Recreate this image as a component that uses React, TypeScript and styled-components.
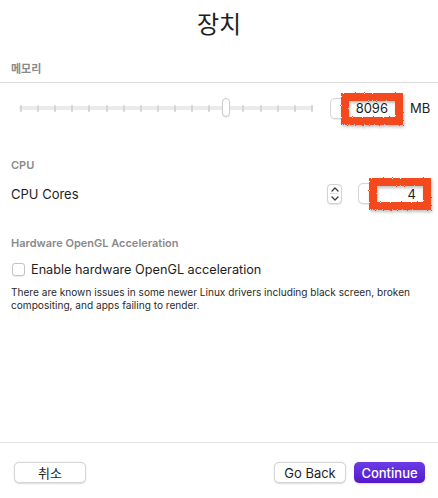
import React from "react";
import styled, { createGlobalStyle } from "styled-components";

const Global = createGlobalStyle`
  html, body { margin: 0; padding: 0; background: #ffffff; }
  body {
    font-family: Inter, "Noto Sans", "Noto Sans CJK KR", sans-serif;
    color: #222;
    -webkit-font-smoothing: antialiased;
  }
`;

const Page = styled.div`
  width: 438px;
  height: 498px;
  display: flex;
  flex-direction: column;
  background: #fff;
  overflow: hidden;
`;

const Title = styled.h1`
  margin: 0;
  height: 46px;
  line-height: 46px;
  text-align: center;
  font-family: "Noto Sans CJK KR", sans-serif;
  font-weight: 400;
  font-size: 24px;
  color: #1e1e1e;
`;

const SectionLabel = styled.div<{ $top: number; $divider?: boolean }>`
  margin: ${(p) => p.$top}px 0 0;
  padding: 0 11px ${(p) => (p.$divider ? 6 : 0)}px;
  font-family: Inter, "Noto Sans CJK KR", sans-serif;
  font-size: 11px;
  line-height: 14px;
  font-weight: 600;
  color: #8a8a8a;
  border-bottom: ${(p) => (p.$divider ? "1px solid #dcdcdc" : "none")};
`;

const SliderRow = styled.div`
  margin-top: 14px;
  height: 22px;
  display: flex;
  align-items: center;
  padding-left: 19px;
`;

const Slider = styled.div`
  position: relative;
  width: 294px;
  height: 22px;
  display: flex;
  align-items: center;
`;

const Track = styled.div`
  width: 100%;
  height: 4px;
  border-radius: 2px;
  background: #ebebeb;
  display: flex;
  align-items: center;
  justify-content: space-between;
  padding: 0 0 0 1px;
  box-sizing: border-box;
`;

const Tick = styled.div`
  width: 2px;
  height: 7px;
  background: #d6d6d6;
  border-radius: 1px;
`;

const Thumb = styled.div`
  position: absolute;
  top: 1px;
  width: 8px;
  height: 19px;
  border-radius: 4px;
  background: #fff;
  border: 1px solid #cdcdcd;
  box-sizing: border-box;
  box-shadow: 0 0.5px 1px rgba(0, 0, 0, 0.12);
`;

const InputWrap = styled.div<{ $ml: number }>`
  position: relative;
  margin-left: ${(p) => p.$ml}px;
  width: 70px;
  height: 21px;
`;

const NumberBox = styled.div`
  width: 100%;
  height: 100%;
  box-sizing: border-box;
  border: 1px solid #d6d6d6;
  border-radius: 5px;
  background: #fff;
  box-shadow: 0 0.5px 1px rgba(0, 0, 0, 0.08);
  display: flex;
  align-items: center;
  justify-content: flex-end;
  padding-right: 11px;
  font-size: 13px;
  color: #1e1e1e;
`;

const ScribbleSvg = styled.svg`
  position: absolute;
  left: 11px;
  top: -5px;
  width: 62px;
  height: 32px;
  overflow: visible;
  pointer-events: none;
  filter: drop-shadow(1px 2px 1.5px rgba(0, 0, 0, 0.25));
`;

const Unit = styled.span`
  margin-left: 10px;
  font-size: 13px;
  color: #1e1e1e;
`;

const CpuRow = styled.div`
  margin-top: 11px;
  height: 21px;
  display: flex;
  align-items: center;
  padding: 0 10px 0 11px;
`;

const RowLabel = styled.span`
  flex: 1;
  font-size: 13px;
  color: #1e1e1e;
`;

const Stepper = styled.div`
  width: 15px;
  height: 20px;
  box-sizing: border-box;
  border: 1px solid #d3d3d3;
  border-radius: 4px;
  background: #fff;
  box-shadow: 0 0.5px 1px rgba(0, 0, 0, 0.1);
  display: flex;
  flex-direction: column;
  align-items: center;
  justify-content: space-between;
  padding: 2px 0;
`;

const StepDivider = styled.div`
  width: 9px;
  height: 1px;
  background: #e2e2e2;
`;

const CheckRow = styled.label`
  margin-top: 11px;
  height: 16px;
  display: flex;
  align-items: center;
  padding-left: 12px;
  gap: 6px;
  font-size: 12.7px;
  color: #1e1e1e;
`;

const CheckBox = styled.span`
  width: 13px;
  height: 13px;
  box-sizing: border-box;
  border: 1px solid #c4c4c4;
  border-radius: 3px;
  background: #fff;
  box-shadow: 0 0.5px 1px rgba(0, 0, 0, 0.08);
`;

const Desc = styled.p`
  margin: 9px 0 0;
  padding: 0 11px;
  font-size: 10.1px;
  line-height: 13px;
  color: #2a2a2a;
`;

const Footer = styled.div`
  margin-top: auto;
  border-top: 1px solid #e2e2e2;
  padding: 19px 13px 15px 14px;
  display: flex;
  align-items: center;
  gap: 8px;
`;

const Button = styled.button<{ $primary?: boolean; $push?: boolean }>`
  width: ${(p) => (p.$primary ? 71 : 72)}px;
  height: 21px;
  margin: 0;
  margin-right: ${(p) => (p.$push ? "auto" : "0")};
  padding: 0;
  border-radius: 5px;
  font-family: Inter, "Noto Sans CJK KR", sans-serif;
  font-size: 13px;
  font-weight: ${(p) => (p.$primary ? 500 : 400)};
  color: ${(p) => (p.$primary ? "#ffffff" : "#1e1e1e")};
  background: ${(p) =>
    p.$primary ? "linear-gradient(#6a3de6, #5518cc)" : "#ffffff"};
  border: ${(p) => (p.$primary ? "none" : "1px solid #d6d6d6")};
  box-shadow: 0 0.5px 1.5px rgba(0, 0, 0, 0.15);
  cursor: default;
`;

const Scribble: React.FC<{ id: string }> = ({ id }) => (
  <ScribbleSvg viewBox="0 0 62 32">
    <defs>
      <filter id={id} x="-20%" y="-30%" width="140%" height="160%">
        <feTurbulence type="fractalNoise" baseFrequency="0.9" numOctaves="2" seed="3" />
        <feDisplacementMap in="SourceGraphic" scale="3" />
      </filter>
    </defs>
    <rect
      x="4"
      y="4"
      width="54"
      height="24"
      fill="none"
      stroke="#f3481c"
      strokeWidth="8"
      filter={`url(#${id})`}
    />
  </ScribbleSvg>
);

const Chevron: React.FC<{ up?: boolean }> = ({ up }) => (
  <svg width="8" height="5" viewBox="0 0 8 5">
    <path
      d={up ? "M1 4 L4 1 L7 4" : "M1 1 L4 4 L7 1"}
      fill="none"
      stroke="#3a3a3a"
      strokeWidth="1.3"
      strokeLinecap="round"
      strokeLinejoin="round"
    />
  </svg>
);

const TICKS = 18;
const THUMB_INDEX = 12;

export default function App() {
  const thumbLeft = 1 + (THUMB_INDEX * 292) / (TICKS - 1) - 4;
  return (
    <Page>
      <Global />
      <Title>장치</Title>

      <SectionLabel $top={16} $divider>
        메모리
      </SectionLabel>
      <SliderRow>
        <Slider>
          <Track>
            {Array.from({ length: TICKS }).map((_, i) => (
              <Tick key={i} />
            ))}
          </Track>
          <Thumb style={{ left: thumbLeft }} />
        </Slider>
        <InputWrap $ml={17}>
          <NumberBox>8096</NumberBox>
          <Scribble id="rough1" />
        </InputWrap>
        <Unit>MB</Unit>
      </SliderRow>

      <SectionLabel $top={39}>CPU</SectionLabel>
      <CpuRow>
        <RowLabel>CPU Cores</RowLabel>
        <Stepper>
          <Chevron up />
          <StepDivider />
          <Chevron />
        </Stepper>
        <InputWrap $ml={16}>
          <NumberBox>4</NumberBox>
          <Scribble id="rough2" />
        </InputWrap>
      </CpuRow>

      <SectionLabel $top={32}>Hardware OpenGL Acceleration</SectionLabel>
      <CheckRow>
        <CheckBox />
        Enable hardware OpenGL acceleration
      </CheckRow>
      <Desc>
        There are known issues in some newer Linux drivers including black screen, broken
        <br />
        compositing, and apps failing to render.
      </Desc>

      <Footer>
        <Button $push>취소</Button>
        <Button>Go Back</Button>
        <Button $primary>Continue</Button>
      </Footer>
    </Page>
  );
}
